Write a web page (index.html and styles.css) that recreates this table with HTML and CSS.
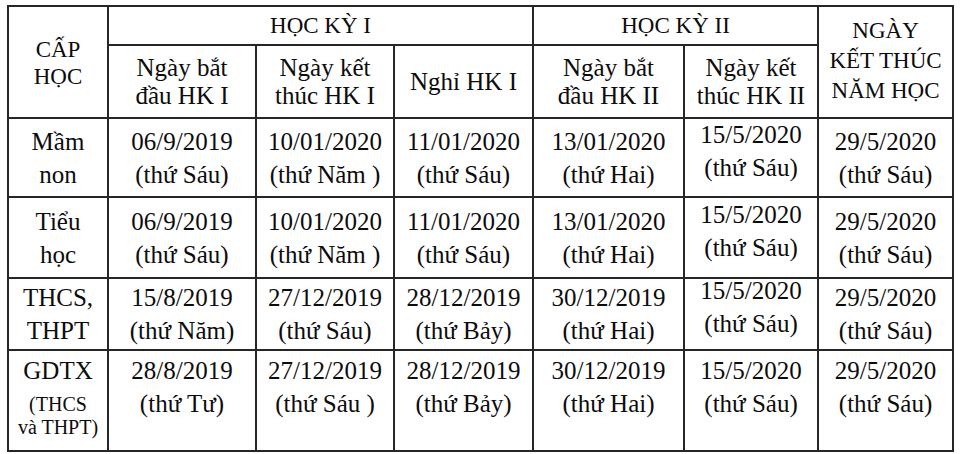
FILE: index.html
```html
<!DOCTYPE html>
<html lang="vi">
<head>
<meta charset="utf-8">
<title>Khung thời gian năm học</title>
<link rel="stylesheet" href="styles.css">
</head>
<body>
<table class="sched">
  <colgroup>
    <col class="c1"><col class="c2"><col class="c3"><col class="c4"><col class="c5"><col class="c6"><col class="c7">
  </colgroup>
  <thead>
    <tr class="h1">
      <th rowspan="2" class="caps cap">CẤP<br>HỌC</th>
      <th colspan="3" class="caps">HỌC KỲ I</th>
      <th colspan="2" class="caps">HỌC KỲ II</th>
      <th rowspan="2" class="caps end">NGÀY<br>KẾT THÚC<br>NĂM HỌC</th>
    </tr>
    <tr class="h2">
      <th>Ngày bắt<br>đầu HK I</th>
      <th>Ngày kết<br>thúc HK I</th>
      <th>Nghỉ HK I</th>
      <th>Ngày bắt<br>đầu HK II</th>
      <th>Ngày kết<br>thúc HK II</th>
    </tr>
  </thead>
  <tbody>
    <tr class="r1">
      <td>Mầm<br>non</td>
      <td>06/9/2019<br>(thứ Sáu)</td>
      <td>10/01/2020<br>(thứ Năm )</td>
      <td>11/01/2020<br>(thứ Sáu)</td>
      <td>13/01/2020<br>(thứ Hai)</td>
      <td><span class="lift">15/5/2020<br>(thứ Sáu)</span></td>
      <td>29/5/2020<br>(thứ Sáu)</td>
    </tr>
    <tr class="r2">
      <td>Tiểu<br>học</td>
      <td>06/9/2019<br>(thứ Sáu)</td>
      <td>10/01/2020<br>(thứ Năm )</td>
      <td>11/01/2020<br>(thứ Sáu)</td>
      <td>13/01/2020<br>(thứ Hai)</td>
      <td><span class="lift">15/5/2020<br>(thứ Sáu)</span></td>
      <td>29/5/2020<br>(thứ Sáu)</td>
    </tr>
    <tr class="r3">
      <td>THCS,<br>THPT</td>
      <td>15/8/2019<br>(thứ Năm)</td>
      <td>27/12/2019<br>(thứ Sáu)</td>
      <td>28/12/2019<br>(thứ Bảy)</td>
      <td>30/12/2019<br>(thứ Hai)</td>
      <td><span class="lift">15/5/2020<br>(thứ Sáu)</span></td>
      <td>29/5/2020<br>(thứ Sáu)</td>
    </tr>
    <tr class="r4">
      <td>GDTX<br><span class="small">(THCS<br>và THPT)</span></td>
      <td>28/8/2019<br>(thứ Tư)</td>
      <td>27/12/2019<br>(thứ Sáu )</td>
      <td>28/12/2019<br>(thứ Bảy)</td>
      <td>30/12/2019<br>(thứ Hai)</td>
      <td>15/5/2020<br>(thứ Sáu)</td>
      <td>29/5/2020<br>(thứ Sáu)</td>
    </tr>
  </tbody>
</table>
</body>
</html>
```

FILE: styles.css
```css
html, body {
  margin: 0;
  padding: 0;
  background: #ffffff;
}
body {
  padding: 5px 0 0 7px;
  font-family: "Liberation Serif", "Times New Roman", serif;
  color: #0c0c0c;
}
.sched {
  border-collapse: collapse;
  table-layout: fixed;
  width: 945px;
  border: 2px solid #222;
}
.c1 { width: 100px; }
.c2 { width: 148px; }
.c3 { width: 138px; }
.c4 { width: 139px; }
.c5 { width: 151px; }
.c6 { width: 134px; }
.c7 { width: 135px; }

.sched th,
.sched td {
  border: 2px solid #262626;
  padding: 0;
  text-align: center;
  vertical-align: middle;
  font-weight: normal;
  font-size: 25px;
  line-height: 33px;
}
.sched th {
  line-height: 28px;
}
.sched th.caps {
  font-size: 23px;
  line-height: 27px;
}
.sched th.end {
  line-height: 30px;
  padding-bottom: 2px;
}
.sched th.cap {
  padding-top: 2px;
}
.h1 { height: 39px; }
.h2 { height: 73px; }
.r1 { height: 79px; }
.r2 { height: 81px; }
.r3 { height: 72px; }
.r4 { height: 101px; }

.lift {
  display: block;
  margin-top: -14px;
}
.r4 td {
  vertical-align: top;
  padding-top: 3px;
}
.small {
  display: inline-block;
  font-size: 20px;
  line-height: 23px;
  padding-top: 6px;
}
```
